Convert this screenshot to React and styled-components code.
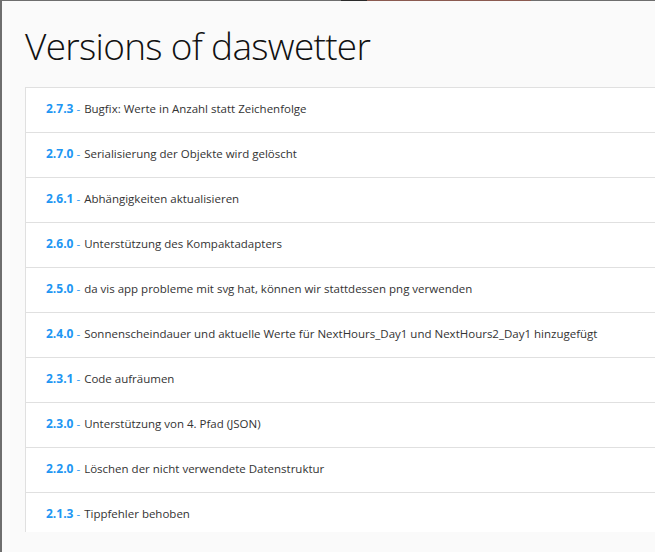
import React from 'react';
import styled, { createGlobalStyle } from 'styled-components';

const GlobalStyle = createGlobalStyle`
  html, body {
    margin: 0;
    padding: 0;
    height: 100%;
    overflow: hidden;
    background: #6e6e6e;
  }
`;

const Backdrop = styled.div`
  height: 552px;
  padding: 1px 0 0 2px;
  box-sizing: border-box;
  background: linear-gradient(90deg, #6e6e6e 0 52%, #2a2a2a 52% 56%, #8a5a50 56% 81%, #6e6e6e 81%);
`;

const Dialog = styled.div`
  height: 100%;
  background: #fafafa;
  display: flex;
  flex-direction: column;
  padding: 0 0 20px 23px;
  box-sizing: border-box;
  font-family: "Open Sans", "Noto Sans", sans-serif;
`;

const Title = styled.h1`
  margin: 0;
  padding: 22px 0 18px;
  font-weight: 300;
  font-size: 37px;
  line-height: 46px;
  color: #111;
  letter-spacing: -0.7px;
`;

const List = styled.div`
  flex: 1;
  min-height: 0;
  overflow: hidden;
  background: #fff;
  border-top: 1px solid #e0e0e0;
  border-left: 1px solid #e0e0e0;
`;

const Row = styled.div`
  height: 45px;
  box-sizing: border-box;
  display: flex;
  align-items: center;
  padding: 0 0 3px 20px;
  border-bottom: 1px solid #e0e0e0;
  font-size: 11.5px;
  color: #333;
  white-space: nowrap;
`;

const Version = styled.span`
  color: #2196f3;
  font-weight: 700;
  font-size: 12px;
  margin-right: 3px;
`;

const Dash = styled.span`
  color: #2196f3;
  margin-right: 4px;
`;

const versions = [
  ['2.7.3', 'Bugfix: Werte in Anzahl statt Zeichenfolge'],
  ['2.7.0', 'Serialisierung der Objekte wird gelöscht'],
  ['2.6.1', 'Abhängigkeiten aktualisieren'],
  ['2.6.0', 'Unterstützung des Kompaktadapters'],
  ['2.5.0', 'da vis app probleme mit svg hat, können wir stattdessen png verwenden'],
  ['2.4.0', 'Sonnenscheindauer und aktuelle Werte für NextHours_Day1 und NextHours2_Day1 hinzugefügt'],
  ['2.3.1', 'Code aufräumen'],
  ['2.3.0', 'Unterstützung von 4. Pfad (JSON)'],
  ['2.2.0', 'Löschen der nicht verwendete Datenstruktur'],
  ['2.1.3', 'Tippfehler behoben'],
];

export default function App() {
  return (
    <>
      <GlobalStyle />
      <Backdrop>
        <Dialog>
          <Title>Versions of daswetter</Title>
          <List>
            {versions.map(([v, text]) => (
              <Row key={v}>
                <Version>{v}</Version>
                <Dash>-</Dash>
                {text}
              </Row>
            ))}
          </List>
        </Dialog>
      </Backdrop>
    </>
  );
}
